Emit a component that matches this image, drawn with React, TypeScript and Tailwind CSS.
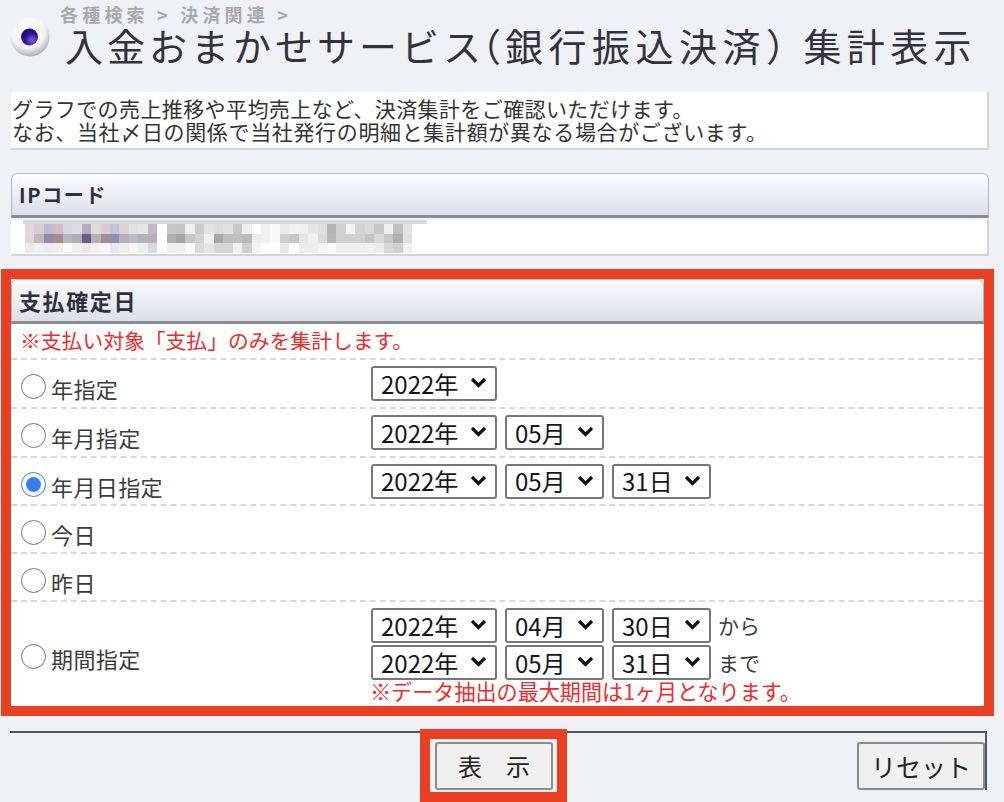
import { type ReactNode } from "react";

const jp = "font-['Noto_Sans_CJK_JP','Liberation_Sans',sans-serif]";

const blurRows = [
  ["#e0d8dc", "#d8ccd6", "#bcbcd0", "#cdbcc4", "#d8d4e0", "#dcdce4", "#b8a8c0", "#e0dcdc", "#d8ccd4", "#c4c4d8", "#dcd0d8", "#e4e0e0", "#e4e6e8", "#c4b8c8", "#ffffff", "#c8c8c8", "#c4c4c4", "#eeeeee", "#cccccc", "#e4e4e4", "#dcdcdc", "#e2e2e2", "#c8c8c8", "#eeeeee", "#ffffff", "#f0f0f0", "#fafafa", "#ebebeb", "#f2f2f2", "#f0f0f0", "#e6e6e6", "#e0e0e0", "#b4b4b4", "#d0d0d0", "#f4f4f4", "#d4d4d4", "#dcdcdc", "#c8c8c8", "#eeeeee", "#c0c0c0", "#e4e4e4"],
  ["#e0d4d8", "#c8b4bc", "#8c8cb0", "#a88c94", "#b8b4cc", "#b0b0b4", "#705880", "#b0b4b0", "#a88c94", "#8c90b4", "#bcacbc", "#c0b8c4", "#b4b4bc", "#bcacbc", "#ffffff", "#b0b0b0", "#a4a4a4", "#c8c8c8", "#d4d4d4", "#f0f0f0", "#a8a8a8", "#bcbcbc", "#c0c0c0", "#b8b8b8", "#ececec", "#f0f0f0", "#fafafa", "#d0d0d0", "#c8c8c8", "#e6e6e6", "#f2f2f2", "#dcdcdc", "#b8b8b8", "#d0d0d0", "#d0d0d0", "#d0d0d0", "#c4c4c4", "#d8d8d8", "#c8c8c8", "#b0b0b0", "#e0e0e0"],
  ["#f0e8e8", "#f0f0f4", "#ececf0", "#f0ecf0", "#fafaf6", "#f0f0f4", "#e8e8e8", "#f6f0ec", "#f6f6fa", "#e8e8ec", "#f0ecf0", "#f8f6f4", "#eceef0", "#dcd8dc", "#ffffff", "#f0f0f0", "#eeeeee", "#fafafa", "#dcdcdc", "#e6e6e6", "#d4d4d4", "#d4d4d4", "#f0f0f0", "#d0d0d0", "#f4f4f4", "#ffffff", "#ffffff", "#e8e8e8", "#ffffff", "#ececec", "#ececec", "#f4f4f4", "#f8f8f8", "#f0f0f0", "#f0f0f0", "#f0f0f0", "#f0f0f0", "#ececec", "#d8d8d8", "#d0d0d0", "#f0f0f0"],
];

const HeadIcon = () => (
  <svg width="40" height="40" viewBox="0 0 40 40" className="shrink-0">
    <defs>
      <radialGradient id="ball" cx="45%" cy="35%" r="70%">
        <stop offset="0%" stopColor="#ffffff" />
        <stop offset="62%" stopColor="#f4f4f6" />
        <stop offset="100%" stopColor="#9c9ca4" />
      </radialGradient>
      <radialGradient id="eye" cx="65%" cy="70%" r="75%">
        <stop offset="0%" stopColor="#7a66c8" />
        <stop offset="55%" stopColor="#2c10a0" />
        <stop offset="100%" stopColor="#1c0a80" />
      </radialGradient>
    </defs>
    <circle cx="20" cy="20" r="19.5" fill="url(#ball)" />
    <circle cx="19.5" cy="20" r="8.5" fill="url(#eye)" />
  </svg>
);

const SectionHead = ({ children, size }: { children: ReactNode; size: string }) => (
  <div className={`${size} flex h-[45px] items-center rounded-t-[6px] border-x border-t border-x-[#b4b6bc] border-t-[#b8bac0] border-b-[3px] border-b-[#8a8c94] bg-gradient-to-b from-[#fbfcff] to-[#dcdfe9] pl-[7px] font-bold tracking-[1.6px] text-[#30303c]`}>
    {children}
  </div>
);

const Picker = ({ value, options, w }: { value: string; options: string[]; w: string }) => (
  <div className={`${w} relative h-[35px]`}>
    <select
      defaultValue={value}
      className="h-full w-full appearance-none rounded-[3px] border-2 border-[#777] bg-white pl-[8px] text-[24px] leading-none text-[#16161e]"
    >
      {options.map((o) => (
        <option key={o}>{o}</option>
      ))}
    </select>
    <svg width="17" height="11" viewBox="0 0 17 11" className="pointer-events-none absolute right-[10px] top-[11px]">
      <path d="M2 2 L8.5 8.5 L15 2" fill="none" stroke="#111" strokeWidth="3.2" />
    </svg>
  </div>
);

const YearMonthDay = ({ m, d, parts = 3 }: { m: string; d: string; parts?: number }) => (
  <div className="flex gap-[8px]">
    <Picker value="2022年" options={["2021年", "2022年"]} w="w-[126px]" />
    {parts > 1 && <Picker value={m} options={["04月", "05月"]} w="w-[99px]" />}
    {parts > 2 && <Picker value={d} options={["30日", "31日"]} w="w-[99px]" />}
  </div>
);

const RadioLabel = ({ label, checked, nudge }: { label: string; checked?: boolean; nudge: string }) => (
  <label className={`${nudge} flex w-[350px] shrink-0 items-center text-[22px] text-[#3c3c3c]`}>
    <input
      type="radio"
      name="kind"
      defaultChecked={checked}
      className="mb-[4px] mr-[5px] h-[25px] w-[25px] accent-[#3b7cf6]"
    />
    <span className="tracking-[0.4px]">{label}</span>
  </label>
);

const Row = ({ label, checked, h, children }: { label: string; checked?: boolean; h: string; children?: ReactNode }) => (
  <div className={`${h} relative flex items-center border-b-2 border-dashed border-[#d8d8d8] pl-[10px]`}>
    <RadioLabel label={label} checked={checked} nudge="mt-[10px]" />
    {children}
  </div>
);

export default function App() {
  return (
    <div className={`${jp} h-[802px] w-[1004px] overflow-hidden bg-[#eff1f5]`}>
      <header className="flex h-[92px] items-start pl-[10px] pt-[17px]">
        <HeadIcon />
        <div className="-mt-[17px] ml-[10px]">
          <div className="pt-[1px] text-[18px] font-bold leading-[26px] tracking-[4.2px] text-[#a9a9ad]">各種検索 &gt; 決済関連 &gt;</div>
          <h1 className="ml-[5px] mt-[-4px] whitespace-nowrap text-[38px] font-normal leading-[44px] tracking-[4px] text-[#33333f]">
            入金おまかせサービス
            <span className="-ml-[22px]">（</span>
            <span className="tracking-[5.5px]">銀行振込決済）</span>
            <span className="-ml-[6px] tracking-[5.3px]">集計表示</span>
          </h1>
        </div>
      </header>

      <p className="ml-[11px] h-[58px] w-[978px] border-b-2 border-r-2 border-[#d4d5d9] bg-white pl-[1px] pt-[5px] text-[21px] leading-[23px] text-[#333]">
        <span className="tracking-[0.4px]">グラフでの売上推移や平均売上など、決済集計をご確認いただけます。</span>
        <br />
        <span className="tracking-[0.65px]">なお、当社〆日の関係で当社発行の明細と集計額が異なる場合がございます。</span>
      </p>

      <section className="ml-[11px] mt-[23px] w-[978px]">
        <SectionHead size="text-[20px]">IPコード</SectionHead>
        <div className="mt-[2px] h-[36px] border-b-2 border-r-2 border-[#d4d5d9] bg-white">
          <div className="ml-[12px] h-[4px] w-[404px] bg-[#d8d8da]" />
          <div className="ml-[14px]">
            {blurRows.map((cells, i) => (
              <div key={i} className="flex h-[9.5px]">
                {cells.map((c, j) => (
                  <div key={j} className="h-full w-[9.44px]" style={{ backgroundColor: c }} />
                ))}
              </div>
            ))}
          </div>
        </div>
      </section>

      <section className="ml-[1px] mt-[13px] h-[447px] w-[993px] border-[10px] border-[#e93f23] bg-white">
        <SectionHead size="text-[22px]">支払確定日</SectionHead>
        <div className="flex h-[36px] items-center border-b-2 border-dashed border-[#d8d8d8] pl-[9px] text-[20.8px] text-[#f02a2a]">
          ※支払い対象「支払」のみを集計します。
        </div>
        <Row label="年指定" h="h-[49px]">
          <YearMonthDay m="05月" d="31日" parts={1} />
        </Row>
        <Row label="年月指定" h="h-[49px]">
          <YearMonthDay m="05月" d="31日" parts={2} />
        </Row>
        <Row label="年月日指定" h="h-[48px]" checked>
          <YearMonthDay m="05月" d="31日" />
        </Row>
        <Row label="今日" h="h-[48px]" />
        <Row label="昨日" h="h-[48px]" />
        <div className="flex items-center pl-[10px]">
          <RadioLabel label="期間指定" nudge="mt-[12px]" />
          <div className="pt-[6px]">
            <div className="flex items-center gap-[7px] text-[21px] text-[#3c3c3c]">
              <YearMonthDay m="04月" d="30日" />
              <span>から</span>
            </div>
            <div className="mt-[2px] flex items-center gap-[7px] text-[21px] text-[#3c3c3c]">
              <YearMonthDay m="05月" d="31日" />
              <span>まで</span>
            </div>
            <p className="-ml-[1px] -mt-[1px] text-[21.1px] leading-[24px] text-[#f02a2a]">※データ抽出の最大期間は1ヶ月となります。</p>
          </div>
        </div>
      </section>

      <footer className="ml-[10px] mt-[15px] flex h-[59px] w-[977px] items-start border-r-2 border-t-2 border-[#55555c]">
        <div className="ml-[410px] mt-[-4px] h-[73px] w-[147px] border-[10px] border-[#e93f23] bg-[#eff1f5] pl-[5px] pt-[3px]">
          <button className="h-[48px] w-[118px] rounded-[3px] border-2 border-[#8c8c8c] bg-[#f0f0f0] text-[24px] leading-none text-[#222]">
            表　示
          </button>
        </div>
        <button className="ml-auto mt-[9px] h-[48px] w-[128px] rounded-[3px] border-2 border-[#8c8c8c] bg-[#f0f0f0] text-[25px] leading-none text-[#222]">
          リセット
        </button>
      </footer>
    </div>
  );
}
